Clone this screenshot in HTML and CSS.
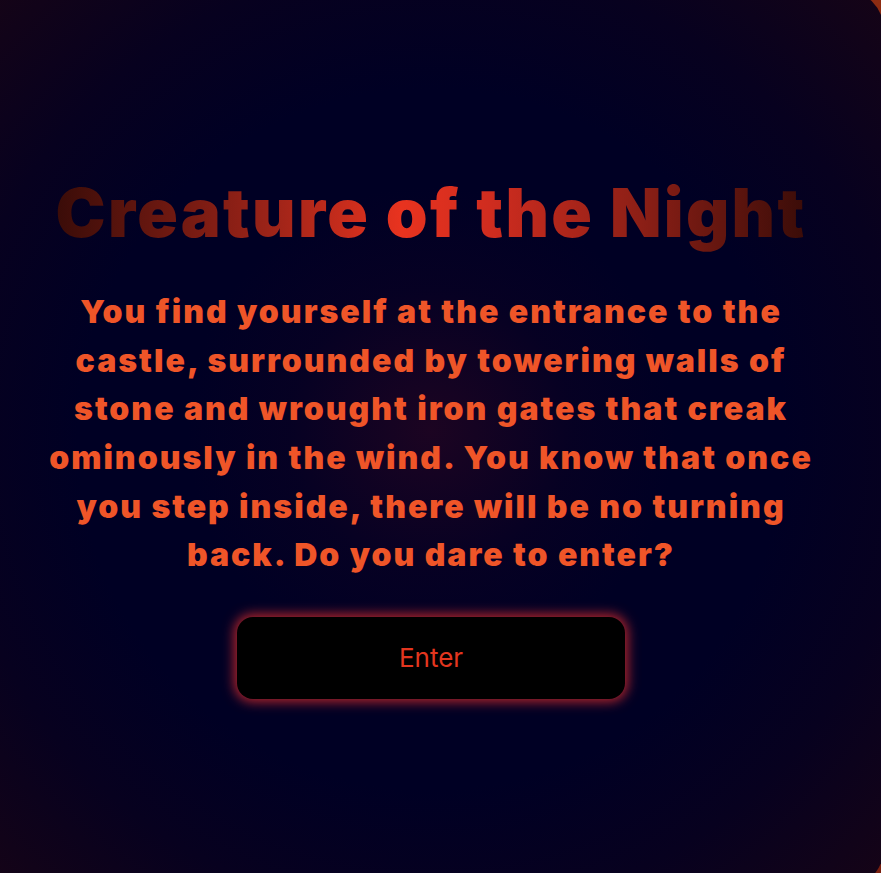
FILE: index.html
```html
<!DOCTYPE html>
<html lang="en">
<head>
<meta charset="utf-8">
<title>Creature of the Night</title>
<link rel="stylesheet" href="styles.css">
</head>
<body>
<main class="scene">
  <h1 class="title">Creature of the Night</h1>
  <p class="story">You find yourself at the entrance to the castle, surrounded by towering walls of stone and wrought iron gates that creak ominously in the wind. You know that once you step inside, there will be no turning back. Do you dare to enter?</p>
  <button class="enter" type="button">Enter</button>
</main>
</body>
</html>
```
FILE: styles.css
```css
html, body {
  margin: 0;
  padding: 0;
}
body {
  height: 873px;
  overflow: hidden;
  background: linear-gradient(180deg, #8e2c12 0%, #5a1409 50%, #7a2010 100%);
  font-family: Inter, "Open Sans", sans-serif;
}
.scene {
  box-sizing: border-box;
  margin: -10px -3px 0 -22px;
  height: 898px;
  padding-bottom: 6px;
  border-radius: 40px;
  display: flex;
  flex-direction: column;
  align-items: center;
  justify-content: center;
  background:
    radial-gradient(circle at 50% 49%, rgba(70, 10, 30, 0.4) 0%, rgba(40, 5, 30, 0.15) 22%, rgba(0, 0, 36, 0) 38%),
    radial-gradient(ellipse farthest-corner at 50% 50%, #000024 55%, #07011f 75%, #160416 100%);
}
.title {
  margin: 0 0 35px;
  font-size: 67px;
  font-weight: 900;
  line-height: 80px;
  letter-spacing: 2.3px;
  text-align: center;
  background: linear-gradient(90deg, #3a0c08 0%, #9a2318 28%, #e8331f 46%, #cf2c1f 58%, #8c1f16 78%, #3a0c08 100%);
  -webkit-background-clip: text;
  background-clip: text;
  color: transparent;
}
.story {
  margin: 0 0 37px;
  width: 786px;
  font-size: 32px;
  font-weight: 900;
  line-height: 48.6px;
  letter-spacing: 2px;
  text-align: center;
  color: #ef5528;
}
.enter {
  width: 388px;
  height: 82px;
  border: none;
  border-radius: 16px;
  background: #000;
  box-shadow: 0 0 12px 3px rgba(220, 45, 45, 0.8);
  color: #e3361f;
  font-family: Inter, sans-serif;
  font-size: 26px;
  font-weight: 400;
  cursor: pointer;
}
```
